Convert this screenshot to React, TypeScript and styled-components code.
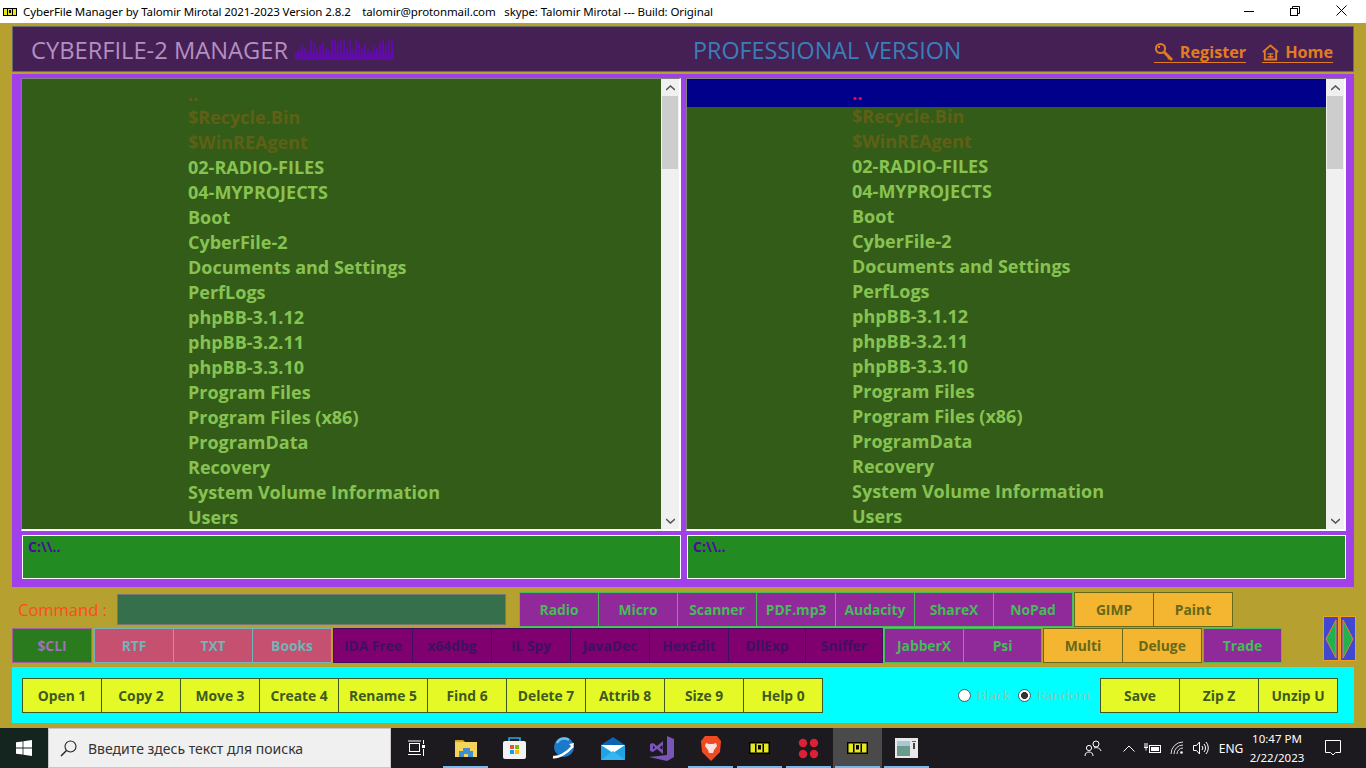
import React from "react";
import styled, {createGlobalStyle} from "styled-components";

const GlobalStyle = createGlobalStyle`
  html, body {
    margin: 0;
    padding: 0;
    overflow: hidden;
    background: #b5a030;
  }
`;

const FONT = `"Open Sans", "Noto Sans", sans-serif`;

const files = [
  {name: "..", hidden: true},
  {name: "$Recycle.Bin", hidden: true},
  {name: "$WinREAgent", hidden: true},
  {name: "02-RADIO-FILES"},
  {name: "04-MYPROJECTS"},
  {name: "Boot"},
  {name: "CyberFile-2"},
  {name: "Documents and Settings"},
  {name: "PerfLogs"},
  {name: "phpBB-3.1.12"},
  {name: "phpBB-3.2.11"},
  {name: "phpBB-3.3.10"},
  {name: "Program Files"},
  {name: "Program Files (x86)"},
  {name: "ProgramData"},
  {name: "Recovery"},
  {name: "System Volume Information"},
  {name: "Users"},
];

const palettes = {
  purple: {bg: "#902a9a", fg: "#47bb58", line: "#47bb58"},
  orange: {bg: "#f4b530", fg: "#66681a", line: "#66681a"},
  rose: {bg: "#c5506f", fg: "#72b4b8", line: "#72b4b8"},
  plum: {bg: "#800070", fg: "#3f1060", line: "#3f1060"},
  lime: {bg: "#e4f925", fg: "#3f5a1e", line: "#3f5a1e"},
  moss: {bg: "#2a7a1e", fg: "#a070b8", line: "#a8609c"},
};
type Tone = keyof typeof palettes;

const waveHeights = [8, 11, 15, 12, 9, 21, 17, 11, 14, 18, 12, 10, 20, 21, 16, 21, 21, 13, 21, 11, 21, 17, 12, 16, 11, 9, 14, 12, 17, 21, 14, 21, 21];

const Logo = ({size = 1}: {size?: number}) => (
  <svg width={14 * size} height={8 * size} viewBox="0 0 14 8">
    <rect width="14" height="8" fill="#000" />
    <rect x="1" y="1" width="12" height="6" fill="#e8e820" />
    <rect x="4" y="1" width="1" height="6" fill="#000" />
    <rect x="9" y="1" width="1" height="6" fill="#000" />
    <rect x="6" y="2" width="2" height="3" fill="#000" />
  </svg>
);

const Wave = () => (
  <svg width="99" height="21" viewBox="0 0 99 21" shapeRendering="crispEdges">
    {waveHeights.map((h, i) => (
      <rect key={i} x={i * 3} y={21 - h} width="2" height={h} fill="#5f0ba6" />
    ))}
    <rect x="0" y="14" width="99" height="7" fill="#5f0ba6" />
  </svg>
);

const KeyIcon = () => (
  <svg width="20" height="20" viewBox="0 0 20 20" fill="none" stroke="#e27c20">
    <circle cx="6.500" cy="6.500" r="4.600" strokeWidth="2" />
    <path d="M10 10l8 8" strokeWidth="3" />
    <path d="M14 17l2-2" strokeWidth="2" />
    <rect x="4" y="4" width="2" height="2" fill="#e27c20" stroke="none" />
  </svg>
);

const HomeIcon = () => (
  <svg width="17" height="18" viewBox="0 0 18 18" fill="none" stroke="#e27c20" strokeWidth="2">
    <path d="M1 9l8-7 8 7" />
    <path d="M3 8v9h12V8" />
    <path d="M6 11h6M9 11v5M6 14h6" strokeWidth="1.400" />
  </svg>
);

const WinLogo = () => (
  <svg width="16" height="16" viewBox="0 0 16 16" fill="#fff">
    <path d="M0 2.300l6.600-.9v6.200H0zM7.400 1.300L16 0v7.600H7.400zM0 8.400h6.600v6.200L0 13.700zM7.400 8.400H16V16l-8.600-1.200z" />
  </svg>
);

const SearchIcon = () => (
  <svg width="17" height="17" viewBox="0 0 17 17" fill="none" stroke="#222" strokeWidth="1.100">
    <circle cx="10.500" cy="6.500" r="5.500" />
    <path d="M6.500 10.500L1 16" strokeWidth="1.400" />
  </svg>
);

const TaskViewIcon = () => (
  <svg width="17" height="16" viewBox="0 0 17 16" fill="none" stroke="#fff">
    <rect x="1.500" y="3.500" width="10" height="8" />
    <path d="M0 1h13M0 14.500h13M15.500 0v4M15.500 9v7" />
    <rect x="14" y="5" width="3" height="3" fill="#fff" stroke="none" />
  </svg>
);

const ExplorerIcon = () => (
  <svg width="22" height="19" viewBox="0 0 22 19">
    <path d="M0 1h8l2 2h-10z" fill="#d9a520" />
    <rect y="3" width="22" height="15" fill="#f6d45c" />
    <path d="M4 18v-6h4v-3h7v3h3v6h-5v-3h-4v3z" fill="#3f8fd0" />
  </svg>
);

const StoreIcon = () => (
  <svg width="23" height="24" viewBox="0 0 23 24">
    <path d="M6 6V2h11v4" fill="none" stroke="#29a7e1" strokeWidth="1.600" />
    <rect y="5" width="23" height="18" rx="2" fill="#f2f2f2" />
    <rect x="7" y="9" width="4" height="4" fill="#f25022" />
    <rect x="12" y="9" width="4" height="4" fill="#7fba00" />
    <rect x="7" y="14" width="4" height="4" fill="#00a4ef" />
    <rect x="12" y="14" width="4" height="4" fill="#ffb900" />
  </svg>
);

const BrowserIcon = () => (
  <svg width="23" height="22" viewBox="0 0 23 22">
    <circle cx="12" cy="10" r="10" fill="#1c78c8" />
    <path d="M5 6a8 8 0 0 1 12-3" stroke="#6cc0f2" strokeWidth="2.500" fill="none" />
    <path d="M1 20c5 1 13-3 20-11" stroke="#fff" strokeWidth="2.600" fill="none" />
    <path d="M17 7l5-1-1 5z" fill="#fff" />
  </svg>
);

const MailIcon = () => (
  <svg width="24" height="23" viewBox="0 0 24 23">
    <path d="M0 8l12-8 12 8z" fill="#0c63b5" />
    <rect y="8" width="24" height="15" fill="#1fa3e6" />
    <path d="M0 8l12 8 12-8z" fill="#fff" />
    <path d="M0 23l12-9 12 9z" fill="#37b5f0" />
  </svg>
);

const StudioIcon = () => (
  <svg width="25" height="25" viewBox="0 0 25 25">
    <path d="M18 0l7 3v18l-7 4L0 21l18-2z" fill="#7a55b8" />
    <path d="M1 8l3-1 4 3 6-5v13l-6-5-4 3-3-1z" fill="#7a55b8" />
    <path d="M4 9.500v4l2-2zM10.500 11.500l3-2.500v5z" fill="#1c1a1f" />
  </svg>
);

const BraveIcon = () => (
  <svg width="20" height="25" viewBox="0 0 20 25">
    <path d="M4 0h12l4 5-1 11-9 9-9-9L0 5z" fill="#f04a23" />
    <path d="M5 7l3 1h4l3-1 1 3-3 4-1 3h-4l-1-3-3-4z" fill="#fff" opacity=".85" />
    <path d="M8 17h4l-2 2z" fill="#f04a23" />
  </svg>
);

const DotsIcon = () => (
  <svg width="21" height="21" viewBox="0 0 21 21" fill="#dc2035">
    <circle cx="5" cy="5" r="4.200" />
    <circle cx="16" cy="5" r="4.200" />
    <circle cx="5" cy="16" r="4.200" />
    <circle cx="16" cy="16" r="4.200" />
  </svg>
);

const NotesIcon = () => (
  <svg width="23" height="20" viewBox="0 0 23 20">
    <rect width="23" height="20" fill="#e8e8e8" />
    <rect x="2" y="3" width="13" height="15" fill="#6a9a8a" />
    <rect x="2" y="3" width="13" height="5" fill="#a8c8d8" />
    <rect x="17" y="3" width="4" height="1" fill="#666" />
    <rect x="18" y="5" width="2" height="6" fill="#444" />
  </svg>
);

const PersonIcon = () => (
  <svg width="18" height="17" viewBox="0 0 18 17" fill="none" stroke="#fff">
    <circle cx="12" cy="4" r="3" />
    <circle cx="5" cy="8" r="2.600" />
    <path d="M1 16c0-3 2-4 4-4s4 1 4 4M10 8c3-1 6 0 7 3" />
  </svg>
);

const BatteryIcon = () => (
  <svg width="17" height="11" viewBox="0 0 17 11" fill="none" stroke="#fff">
    <rect x="5.500" y="2.500" width="11" height="7" />
    <rect x="7" y="4" width="8" height="4" fill="#fff" stroke="none" />
    <path d="M0 4.500h4M2 4.500v3M1 0v4M3 0v4" />
  </svg>
);

const WifiIcon = () => (
  <svg width="14" height="14" viewBox="0 0 14 14" fill="none" stroke="#ddd">
    <path d="M1 13A12 12 0 0 1 13 1M4 13a9 9 0 0 1 9-9M7 13a6 6 0 0 1 6-6" />
    <circle cx="11.500" cy="11.500" r="1.300" fill="#fff" stroke="none" />
  </svg>
);

const SpeakerIcon = () => (
  <svg width="17" height="14" viewBox="0 0 17 14" fill="none" stroke="#fff">
    <path d="M.5 4.500h3l3-3.500v12l-3-3.500h-3z" />
    <path d="M9 5a3 3 0 0 1 0 4M11 3a6 6 0 0 1 0 8M13 1a9 9 0 0 1 0 12" />
  </svg>
);

const BubbleIcon = () => (
  <svg width="16" height="16" viewBox="0 0 16 16" fill="none" stroke="#fff">
    <path d="M.5.5h15v12h-5l-2.500 2.500L5.500 12.500h-5z" />
  </svg>
);

const Panel = ({selected}: {selected?: boolean}) => (
  <PaneColumn>
    <ListBox>
      <ListRows $inset={selected ? 165 : 166}>
        {files.map((file, i) => (
          <FileRow key={file.name} $hidden={file.hidden} $selected={selected && i === 0} $lead={i === 0}>
            {file.name}
          </FileRow>
        ))}
      </ListRows>
      <ScrollBar>
        <ScrollBtn>
          <svg width="9" height="6" viewBox="0 0 9 6"><path d="M0 5l4.500-4 4.500 4" fill="none" stroke="#555" strokeWidth="1.600" /></svg>
        </ScrollBtn>
        <ScrollThumb />
        <ScrollBtn>
          <svg width="9" height="6" viewBox="0 0 9 6"><path d="M0 1l4.500 4 4.500-4" fill="none" stroke="#555" strokeWidth="1.600" /></svg>
        </ScrollBtn>
      </ScrollBar>
    </ListBox>
    <PathBox>C:\\..</PathBox>
  </PaneColumn>
);

const Buttons = ({tone, items}: {tone: Tone; items: (string | [string, number])[]}) => (
  <Group $tone={tone}>
    {items.map((item) => {
      const label = typeof item === "string" ? item : item[0];
      const width = typeof item === "string" ? 79 : item[1];
      return (
        <Cell key={label} $tone={tone} $w={width}>
          {label}
        </Cell>
      );
    })}
  </Group>
);

const App = () => (
  <Page>
    <GlobalStyle />
    <TitleBar>
      <Logo />
      <TitleText>
        CyberFile Manager by Talomir Mirotal 2021-2023 Version 2.8.2 &nbsp;&nbsp; talomir@protonmail.com &nbsp;&nbsp;skype: Talomir Mirotal --- Build: Original
      </TitleText>
      <WindowControls>
        <WinBtn>
          <svg width="10" height="10" viewBox="0 0 10 10"><path d="M0 5.500h10" stroke="#000" /></svg>
        </WinBtn>
        <WinBtn>
          <svg width="10" height="10" viewBox="0 0 10 10" fill="none" stroke="#000"><rect x=".5" y="2.500" width="7" height="7" /><path d="M2.500 2.500v-2h7v7h-2" /></svg>
        </WinBtn>
        <WinBtn>
          <svg width="11" height="11" viewBox="0 0 11 11" stroke="#000"><path d="M.5.500l10 10M10.500.500l-10 10" /></svg>
        </WinBtn>
      </WindowControls>
    </TitleBar>

    <Main>
      <Header>
        <Brand>
          <BrandName>CYBERFILE-2 MANAGER</BrandName>
          <Wave />
        </Brand>
        <Edition>PROFESSIONAL VERSION</Edition>
        <HeaderLinks>
          <HeaderLink><KeyIcon /> Register</HeaderLink>
          <HeaderLink><HomeIcon /> Home</HeaderLink>
        </HeaderLinks>
      </Header>

      <Panes>
        <Panel />
        <Panel selected />
      </Panes>

      <Tools>
        <ToolRows>
          <ToolRow>
            <CommandLabel>Command :</CommandLabel>
            <CommandInput />
            <Buttons tone="purple" items={["Radio", "Micro", "Scanner", "PDF.mp3", "Audacity", "ShareX", "NoPad"]} />
            <Buttons tone="orange" items={["GIMP", "Paint"]} />
          </ToolRow>
          <ToolRow>
            <CliSlot><Buttons tone="moss" items={[["$CLI", 79]]} /></CliSlot>
            <Buttons tone="rose" items={["RTF", "TXT", "Books"]} />
            <Buttons tone="plum" items={["IDA Free", "x64dbg", "IL Spy", "JavaDec", "HexEdit", ["DllExp", 77], ["Sniffer", 77]]} />
            <Buttons tone="purple" items={["JabberX", ["Psi", 78]]} />
            <Buttons tone="orange" items={["Multi", "Deluge"]} />
            <Buttons tone="purple" items={[["Trade", 78]]} />
          </ToolRow>
        </ToolRows>
        <Arrows>
          <ArrowBtn>
            <svg width="12" height="38" viewBox="0 0 12 38"><path d="M11 0v38L1 19z" fill="#22b14c" stroke="#f08030" /></svg>
          </ArrowBtn>
          <ArrowBtn>
            <svg width="12" height="38" viewBox="0 0 12 38"><path d="M1 0v38l10-19z" fill="#22b14c" stroke="#f08030" /></svg>
          </ArrowBtn>
        </Arrows>
      </Tools>

      <ActionBar>
        <Buttons tone="lime" items={["Open 1", "Copy 2", "Move 3", "Create 4", ["Rename 5", 89], "Find 6", "Delete 7", "Attrib 8", "Size 9", "Help 0"]} />
        <Spacer />
        <RadioLabel $after={8}><RadioDot />Black</RadioLabel>
        <RadioLabel $after={10}><RadioDot $on />Random</RadioLabel>
        <Buttons tone="lime" items={["Save", "Zip Z", "Unzip U"]} />
      </ActionBar>
    </Main>

    <Taskbar>
      <StartBtn><WinLogo /></StartBtn>
      <SearchBox>
        <SearchIcon />
        <span>Введите здесь текст для поиска</span>
      </SearchBox>
      <TaskIcons>
        <TaskSlot><TaskViewIcon /></TaskSlot>
        <TaskSlot $running><ExplorerIcon /></TaskSlot>
        <TaskSlot><StoreIcon /></TaskSlot>
        <TaskSlot><BrowserIcon /></TaskSlot>
        <TaskSlot><MailIcon /></TaskSlot>
        <TaskSlot><StudioIcon /></TaskSlot>
        <TaskSlot $running><BraveIcon /></TaskSlot>
        <TaskSlot $running><Logo size={1.5} /></TaskSlot>
        <TaskSlot $running><DotsIcon /></TaskSlot>
        <TaskSlot $running $active><Logo size={1.5} /></TaskSlot>
        <TaskSlot $running><NotesIcon /></TaskSlot>
      </TaskIcons>
      <Tray>
        <TrayItem $w={56}><PersonIcon /></TrayItem>
        <TrayItem $w={16}>
          <svg width="12" height="7" viewBox="0 0 12 7"><path d="M.5 6.500L6 1l5.500 5.500" fill="none" stroke="#fff" /></svg>
        </TrayItem>
        <TrayItem $w={30}><BatteryIcon /></TrayItem>
        <TrayItem $w={20}><WifiIcon /></TrayItem>
        <TrayItem $w={28}><SpeakerIcon /></TrayItem>
        <TrayItem $w={32}>ENG</TrayItem>
        <Clock>
          <span>10:47 PM</span>
          <span>2/22/2023</span>
        </Clock>
        <TrayItem $w={52}><BubbleIcon /></TrayItem>
      </Tray>
    </Taskbar>
  </Page>
);

const Page = styled.div`
  width: 1366px;
  height: 768px;
  display: flex;
  flex-direction: column;
  background: #b5a030;
  font-family: ${FONT};
  overflow: hidden;
`;

const TitleBar = styled.div`
  height: 23px;
  flex: none;
  display: flex;
  align-items: center;
  padding-left: 3px;
  background: #fff;
  color: #000;
  font-family: "Noto Sans", sans-serif;
  font-size: 11.5px;
  letter-spacing: -0.1px;
`;

const TitleText = styled.span`
  margin-left: 6px;
  white-space: nowrap;
`;

const WindowControls = styled.div`
  margin-left: auto;
  align-self: flex-start;
  display: flex;
  padding-right: 2px;
`;

const WinBtn = styled.div`
  width: 46px;
  height: 21px;
  display: flex;
  align-items: center;
  justify-content: center;
`;

const Main = styled.div`
  flex: 1;
  min-height: 0;
  display: flex;
  flex-direction: column;
  padding: 3px 12px 0;
`;

const Header = styled.div`
  height: 46px;
  flex: none;
  box-sizing: border-box;
  display: grid;
  grid-template-columns: 662px 1fr auto;
  align-items: center;
  padding: 0 20px 0 18px;
  background: #452055;
  border: 1px solid #6a6a6a;
`;

const Brand = styled.div`
  display: flex;
  align-items: center;
  gap: 7px;
`;

const BrandName = styled.span`
  padding-top: 2px;
  font-size: 23.7px;
  color: #b48fc0;
`;

const Edition = styled.span`
  padding-top: 2px;
  font-size: 23.3px;
  color: #3a7fb8;
`;

const HeaderLinks = styled.div`
  display: flex;
  gap: 16px;
  padding-top: 6px;
`;

const HeaderLink = styled.span`
  display: flex;
  align-items: center;
  gap: 6px;
  font-size: 16.2px;
  font-weight: 700;
  color: #e27c20;
  border-bottom: 1px solid #e27c20;
  line-height: 20px;
`;

const Panes = styled.div`
  margin-top: 2px;
  height: 513px;
  flex: none;
  box-sizing: border-box;
  display: flex;
  gap: 5px;
  padding: 4px 8px 8px 9px;
  background: #a040e8;
`;

const PaneColumn = styled.div`
  flex: 1;
  min-width: 0;
  display: flex;
  flex-direction: column;
  gap: 4px;
`;

const ListBox = styled.div`
  height: 453px;
  flex: none;
  box-sizing: border-box;
  display: flex;
  background: #335c18;
  border-top: 1px solid #808080;
  border-left: 1px solid #808080;
  border-bottom: 2px solid #fff;
  border-right: 2px solid #fff;
  overflow: hidden;
`;

const ListRows = styled.div<{$inset: number}>`
  flex: 1;
  min-width: 0;
  padding-left: ${(p) => p.$inset}px;
`;

const FileRow = styled.div<{$hidden?: boolean; $selected?: boolean; $lead?: boolean}>`
  height: ${(p) => (p.$selected ? 24 : 25)}px;
  line-height: ${(p) => (p.$selected ? 29 : p.$lead ? 31 : 27)}px;
  font-size: 18px;
  font-weight: 700;
  white-space: nowrap;
  color: ${(p) => (p.$selected ? "#f00040" : p.$hidden ? "#5f6016" : "#88c352")};
  margin-left: ${(p) => (p.$selected ? -165 : 0)}px;
  padding-left: ${(p) => (p.$selected ? 165 : 0)}px;
  background: ${(p) => (p.$selected ? "#00008b" : "transparent")};
  box-shadow: ${(p) => (p.$selected ? "0 4px 0 #00008b" : "none")};
`;

const ScrollBar = styled.div`
  width: 18px;
  flex: none;
  display: flex;
  flex-direction: column;
  background: #f0f0f0;
`;

const ScrollBtn = styled.div`
  height: 17px;
  flex: none;
  display: flex;
  align-items: center;
  justify-content: center;
`;

const ScrollThumb = styled.div`
  height: 73px;
  flex: none;
  margin: 0 1px auto;
  background: #cdcdcd;
`;

const PathBox = styled.div`
  height: 44px;
  flex: none;
  box-sizing: border-box;
  margin-left: 1px;
  padding: 1px 5px;
  background: #228b22;
  border: 1px solid #fff;
  color: #4b0aa0;
  font-size: 14px;
  font-weight: 700;
  line-height: 20px;
`;

const Tools = styled.div`
  margin-top: 5px;
  display: flex;
  align-items: flex-end;
  justify-content: space-between;
`;

const ToolRows = styled.div`
  display: flex;
  flex-direction: column;
  gap: 1px;
`;

const ToolRow = styled.div`
  display: flex;
  gap: 1px;
`;

const CommandLabel = styled.span`
  width: 104px;
  padding-left: 6px;
  box-sizing: border-box;
  line-height: 35px;
  font-size: 16.5px;
  color: #ff4a20;
  white-space: nowrap;
`;

const CommandInput = styled.div`
  width: 389px;
  height: 31px;
  box-sizing: border-box;
  margin: 2px 12px 0 0;
  background: #366f4c;
  border: 1px solid #fff;
  outline: 1px solid #777;
  outline-offset: -1px;
  border-top-color: #777;
  border-left-color: #777;
`;

const CliSlot = styled.div`
  margin-right: 1px;
`;

const Group = styled.div<{$tone: Tone}>`
  display: flex;
  flex: none;
  border: 1px solid ${(p) => palettes[p.$tone].line};
  background: ${(p) => palettes[p.$tone].bg};
`;

const Cell = styled.div<{$tone: Tone; $w: number}>`
  width: ${(p) => p.$w}px;
  height: 33px;
  box-sizing: border-box;
  display: flex;
  align-items: center;
  justify-content: center;
  border-left: 1px solid ${(p) => palettes[p.$tone].line};
  color: ${(p) => palettes[p.$tone].fg};
  font-size: 13.8px;
  font-weight: 700;
  white-space: nowrap;

  &:first-child {
    width: ${(p) => p.$w - 1}px;
    border-left: none;
  }
`;

const Arrows = styled.div`
  display: flex;
  gap: 1px;
  margin-right: -2px;
  margin-bottom: 2px;
`;

const ArrowBtn = styled.div`
  width: 16px;
  height: 45px;
  box-sizing: border-box;
  display: flex;
  align-items: center;
  justify-content: center;
  background: #4048d0;
  border: 1px solid #f0a020;
`;

const ActionBar = styled.div`
  margin-top: 4px;
  height: 56px;
  flex: none;
  box-sizing: border-box;
  display: flex;
  align-items: center;
  padding: 0 16px 0 10px;
  background: #00ffff;
`;

const Spacer = styled.div`
  flex: 1;
`;

const RadioLabel = styled.label<{$after: number}>`
  display: flex;
  align-items: center;
  gap: 6px;
  margin-right: ${(p) => p.$after}px;
  font-size: 13.5px;
  color: #8cc8b4;
`;

const RadioDot = styled.span<{$on?: boolean}>`
  width: 13px;
  height: 13px;
  box-sizing: border-box;
  border-radius: 50%;
  background: ${(p) => (p.$on ? "radial-gradient(circle, #333 0 3.2px, #fff 3.8px)" : "#fff")};
  border: 1px solid #555;
`;

const Taskbar = styled.div`
  margin-top: 5px;
  height: 40px;
  flex: none;
  display: flex;
  align-items: stretch;
  background: #1c1a1f;
  color: #fff;
  font-family: "Noto Sans", sans-serif;
`;

const StartBtn = styled.div`
  width: 48px;
  display: flex;
  align-items: center;
  justify-content: center;
  background: #14241f;
`;

const SearchBox = styled.div`
  width: 343px;
  box-sizing: border-box;
  display: flex;
  align-items: center;
  gap: 11px;
  padding-left: 11px;
  background: #f0f0f0;
  border: 1px solid #c8c8c8;
  color: #333;
  font-size: 14px;
`;

const TaskIcons = styled.div`
  display: flex;
  margin-left: 1px;
`;

const TaskSlot = styled.div<{$running?: boolean; $active?: boolean}>`
  width: 49px;
  position: relative;
  display: flex;
  align-items: center;
  justify-content: center;
  background: ${(p) => (p.$active ? "#4a4a4a" : "transparent")};

  &::after {
    content: "";
    display: ${(p) => (p.$running ? "block" : "none")};
    position: absolute;
    left: 2px;
    right: 2px;
    bottom: 0;
    height: 2px;
    background: #76b9ed;
  }
`;

const Tray = styled.div`
  margin-left: auto;
  display: flex;
  align-items: center;
  padding-right: 7px;
`;

const TrayItem = styled.div<{$w: number}>`
  width: ${(p) => p.$w}px;
  display: flex;
  align-items: center;
  justify-content: center;
  font-size: 12px;
`;

const Clock = styled.div`
  width: 60px;
  display: flex;
  flex-direction: column;
  align-items: center;
  gap: 3px;
  font-size: 11.5px;
  line-height: 16px;
  white-space: nowrap;
`;

export default App;
